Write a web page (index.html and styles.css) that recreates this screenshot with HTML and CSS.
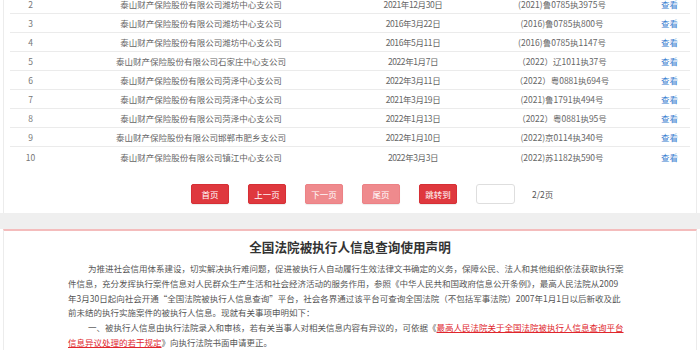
FILE: index.html
```html
<!DOCTYPE html>
<html lang="zh-CN">
<head>
<meta charset="utf-8">
<title>全国法院被执行人信息查询</title>
<link rel="stylesheet" href="styles.css">
</head>
<body>
<div class="card list-card">
  <div class="rows">
    <div class="row"><span class="c-no">2</span><span class="c-name">泰山财产保险股份有限公司潍坊中心支公司</span><span class="c-date">2021年12月30日</span><span class="c-case">(2021)鲁0785执3975号</span><a class="c-view">查看</a></div>
    <div class="row"><span class="c-no">3</span><span class="c-name">泰山财产保险股份有限公司潍坊中心支公司</span><span class="c-date">2016年3月22日</span><span class="c-case">(2016)鲁0785执800号</span><a class="c-view">查看</a></div>
    <div class="row"><span class="c-no">4</span><span class="c-name">泰山财产保险股份有限公司潍坊中心支公司</span><span class="c-date">2016年5月11日</span><span class="c-case">(2016)鲁0785执1147号</span><a class="c-view">查看</a></div>
    <div class="row"><span class="c-no">5</span><span class="c-name">泰山财产保险股份有限公司石家庄中心支公司</span><span class="c-date">2022年1月7日</span><span class="c-case">（2022）辽1011执37号</span><a class="c-view">查看</a></div>
    <div class="row"><span class="c-no">6</span><span class="c-name">泰山财产保险股份有限公司菏泽中心支公司</span><span class="c-date">2022年3月11日</span><span class="c-case">（2022）粤0881执694号</span><a class="c-view">查看</a></div>
    <div class="row"><span class="c-no">7</span><span class="c-name">泰山财产保险股份有限公司菏泽中心支公司</span><span class="c-date">2021年3月19日</span><span class="c-case">(2021)鲁1791执494号</span><a class="c-view">查看</a></div>
    <div class="row"><span class="c-no">8</span><span class="c-name">泰山财产保险股份有限公司菏泽中心支公司</span><span class="c-date">2022年1月13日</span><span class="c-case">（2022）粤0881执95号</span><a class="c-view">查看</a></div>
    <div class="row"><span class="c-no">9</span><span class="c-name">泰山财产保险股份有限公司邯郸市肥乡支公司</span><span class="c-date">2022年1月10日</span><span class="c-case">(2022)京0114执340号</span><a class="c-view">查看</a></div>
    <div class="row last"><span class="c-no">10</span><span class="c-name">泰山财产保险股份有限公司镇江中心支公司</span><span class="c-date">2022年3月3日</span><span class="c-case">(2022)苏1182执590号</span><a class="c-view">查看</a></div>
  </div>
  <div class="pager">
    <button class="btn">首页</button>
    <button class="btn">上一页</button>
    <button class="btn off">下一页</button>
    <button class="btn off">尾页</button>
    <button class="btn">跳转到</button>
    <input class="page-input" type="text">
    <span class="page-count">2/2页</span>
  </div>
</div>
<div class="band"></div>
<div class="card notice">
  <h2 class="notice-title">全国法院被执行人信息查询使用声明</h2>
  <p class="notice-text"><span class="indent">为推进社会信用体系建设，切实解决执行难问题，促进被执行人自动履行生效法律文书确定的义务，保障公民、法人和其他组织依法获取执行案</span><br>件信息，充分发挥执行案件信息对人民群众生产生活和社会经济活动的服务作用，参照《中华人民共和国政府信息公开条例》，最高人民法院从2009<br>年3月30日起向社会开通“全国法院被执行人信息查询”平台，社会各界通过该平台可查询全国法院（不包括军事法院）2007年1月1日以后新收及此<br>前未结的执行实施案件的被执行人信息。现就有关事项申明如下：<br><span class="indent">一、被执行人信息由执行法院录入和审核，若有关当事人对相关信息内容有异议的，可依据《<a class="red-link">最高人民法院关于全国法院被执行人信息查询平台</a></span><br><a class="red-link">信息异议处理的若干规定</a>》向执行法院书面申请更正。</p>
</div>
</body>
</html>
```

FILE: styles.css
```css
* { box-sizing: border-box; }
html, body { margin: 0; padding: 0; }
body {
  width: 700px;
  height: 350px;
  overflow: hidden;
  background: #fff;
  font-family: "Noto Sans CJK SC", "Microsoft YaHei", sans-serif;
  color: #555;
}
.card {
  margin: 0 3px;
  border-left: 1px solid #ececec;
  border-right: 1px solid #ececec;
  background: #fff;
}
.list-card {
  margin-top: -5px;
  padding: 0 6px 9px 6px;
}
.rows { display: flex; flex-direction: column; }
.row {
  display: grid;
  grid-template-columns: 41px 300px 124px 174px 41px;
  height: 19px;
  align-items: center;
  border-bottom: 1px solid #ebebeb;
  font-size: 8.5px;
  color: #666;
  text-align: center;
  line-height: 18px;
}
.row.last { border-bottom: none; }
.c-no { color: #777; }
.c-date { letter-spacing: -0.4px; }
.c-view { color: #3d7fd1; }
.pager {
  display: flex;
  align-items: center;
  gap: 19px;
  margin-top: 18px;
  padding-left: 181px;
  height: 20px;
}
.btn {
  width: 38px;
  height: 20px;
  padding: 0;
  border: 1px solid #d62f35;
  border-radius: 2px;
  background: #df383e;
  color: #fff;
  font-family: inherit;
  font-size: 8.5px;
  line-height: 18px;
  box-shadow: 0 1px 1px rgba(0,0,0,0.08);
}
.btn.off {
  background: #ef8a8d;
  border-color: #ec8185;
}
.page-input {
  width: 39px;
  height: 20px;
  border: 1px solid #dedede;
  border-radius: 3px;
  background: #fff;
  padding: 0;
}
.page-count {
  font-size: 8.5px;
  color: #555;
  margin-left: -2px;
}
.band {
  height: 16px;
  background: #efefef;
}
.notice {
  border-top: 2px solid #f4bcbc;
  padding: 7px 0 0 64px;
  height: 140px;
}
.notice-title {
  margin: 0;
  font-size: 12.6px;
  line-height: 18px;
  font-weight: bold;
  color: #333;
  text-align: center;
  padding-right: 64px;
}
.notice-text {
  margin: 5px 0 0 0;
  font-size: 8.5px;
  line-height: 14.8px;
  color: #555;
  white-space: nowrap;
}
.indent { padding-left: 20px; }
.red-link {
  color: #e0262c;
  text-decoration: underline;
}
```
